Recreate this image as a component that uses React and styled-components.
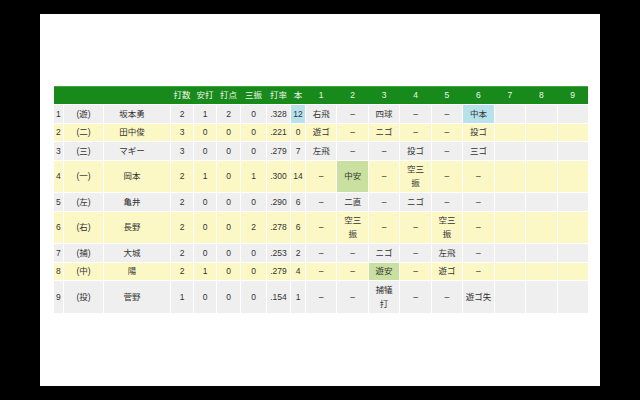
import { createGlobalStyle, styled } from "styled-components";

const GlobalStyle = createGlobalStyle`
    html, body {
        margin: 0;
        padding: 0;
        background: #000;
    }
`;

const Screen = styled.div`
    width: 640px;
    height: 400px;
    box-sizing: border-box;
    padding: 14px 40px;
    background: #000;
`;

const Panel = styled.div`
    height: 372px;
    box-sizing: border-box;
    background: #fff;
    padding: 72px 12px 0 13px;
`;

const ScoreTable = styled.table`
    width: 535px;
    table-layout: fixed;
    border-collapse: collapse;
    font-family: "Liberation Sans", "Noto Sans CJK JP", sans-serif;
    font-size: 8.5px;
    color: #333;
`;

const HeadRow = styled.tr`
    background: #18891b;
`;

const Th = styled.th`
    font-weight: normal;
    color: #eef8ea;
    line-height: 13px;
    padding: 2px 0;
    text-align: center;
    border-top: 1px solid #3fa53f;
`;

const Row = styled.tr`
    background: ${(p) => (p.$tone === "yellow" ? "#fcf8c6" : "#efefef")};
`;

const HIGHLIGHT = {
    blue: "#b7e2ec",
    green: "#c9e0a0",
};

const Td = styled.td`
    line-height: 14px;
    padding: 1.75px 0;
    text-align: ${(p) => p.$align || "center"};
    border: 1px solid #fff;
    white-space: pre-line;
    background: ${(p) => (p.$hl ? HIGHLIGHT[p.$hl] : "transparent")};
`;

const NumCell = styled(Td)`
    padding-left: 2px;
`;

const NameCell = styled(Td)`
    padding-right: 10px;
`;

const widths = [10, 40, 67, 23, 23, 24, 26, 24, 15, ...Array(9).fill(31.44)];
const heads = ["", "", "", "打数", "安打", "打点", "三振", "打率", "本", "1", "2", "3", "4", "5", "6", "7", "8", "9"];

const D = "–";

const players = [
    { pos: "(遊)", name: "坂本勇", stats: ["2", "1", "2", "0", ".328"], hr: "12", hrHl: "blue",
      inn: ["右飛", D, "四球", D, D, { t: "中本", hl: "blue" }] },
    { pos: "(二)", name: "田中俊", stats: ["3", "0", "0", "0", ".221"], hr: "0",
      inn: ["遊ゴ", D, "ニゴ", D, D, "投ゴ"] },
    { pos: "(三)", name: "マギー", stats: ["3", "0", "0", "0", ".279"], hr: "7",
      inn: ["左飛", D, D, "投ゴ", D, "三ゴ"] },
    { pos: "(一)", name: "岡本", stats: ["2", "1", "0", "1", ".300"], hr: "14",
      inn: [D, { t: "中安", hl: "green" }, D, "空三\n振", D, D] },
    { pos: "(左)", name: "亀井", stats: ["2", "0", "0", "0", ".290"], hr: "6",
      inn: [D, "二直", D, "ニゴ", D, D] },
    { pos: "(右)", name: "長野", stats: ["2", "0", "0", "2", ".278"], hr: "6",
      inn: [D, "空三\n振", D, D, "空三\n振", D] },
    { pos: "(捕)", name: "大城", stats: ["2", "0", "0", "0", ".253"], hr: "2",
      inn: [D, D, "ニゴ", D, "左飛", D] },
    { pos: "(中)", name: "陽", stats: ["2", "1", "0", "0", ".279"], hr: "4",
      inn: [D, D, { t: "遊安", hl: "green" }, D, "遊ゴ", D] },
    { pos: "(投)", name: "菅野", stats: ["1", "0", "0", "0", ".154"], hr: "1",
      inn: [D, D, "捕犠\n打", D, D, "遊ゴ失"] },
];

export default function App() {
    return (
        <>
            <GlobalStyle />
            <Screen>
                <Panel>
                    <ScoreTable>
                        <colgroup>
                            {widths.map((w, i) => <col key={i} style={{ width: w }} />)}
                        </colgroup>
                        <thead>
                            <HeadRow>
                                {heads.map((h, i) => <Th key={i}>{h}</Th>)}
                            </HeadRow>
                        </thead>
                        <tbody>
                            {players.map((p, i) => {
                                const inn = [...p.inn, "", "", ""];
                                return (
                                    <Row key={i} $tone={i % 2 ? "yellow" : "gray"}>
                                        <NumCell $align="left">{i + 1}</NumCell>
                                        <Td>{p.pos}</Td>
                                        <NameCell>{p.name}</NameCell>
                                        {p.stats.map((s, j) => <Td key={j}>{s}</Td>)}
                                        <Td $hl={p.hrHl}>{p.hr}</Td>
                                        {inn.map((c, j) =>
                                            typeof c === "object"
                                                ? <Td key={j} $hl={c.hl}>{c.t}</Td>
                                                : <Td key={j}>{c}</Td>
                                        )}
                                    </Row>
                                );
                            })}
                        </tbody>
                    </ScoreTable>
                </Panel>
            </Screen>
        </>
    );
}
